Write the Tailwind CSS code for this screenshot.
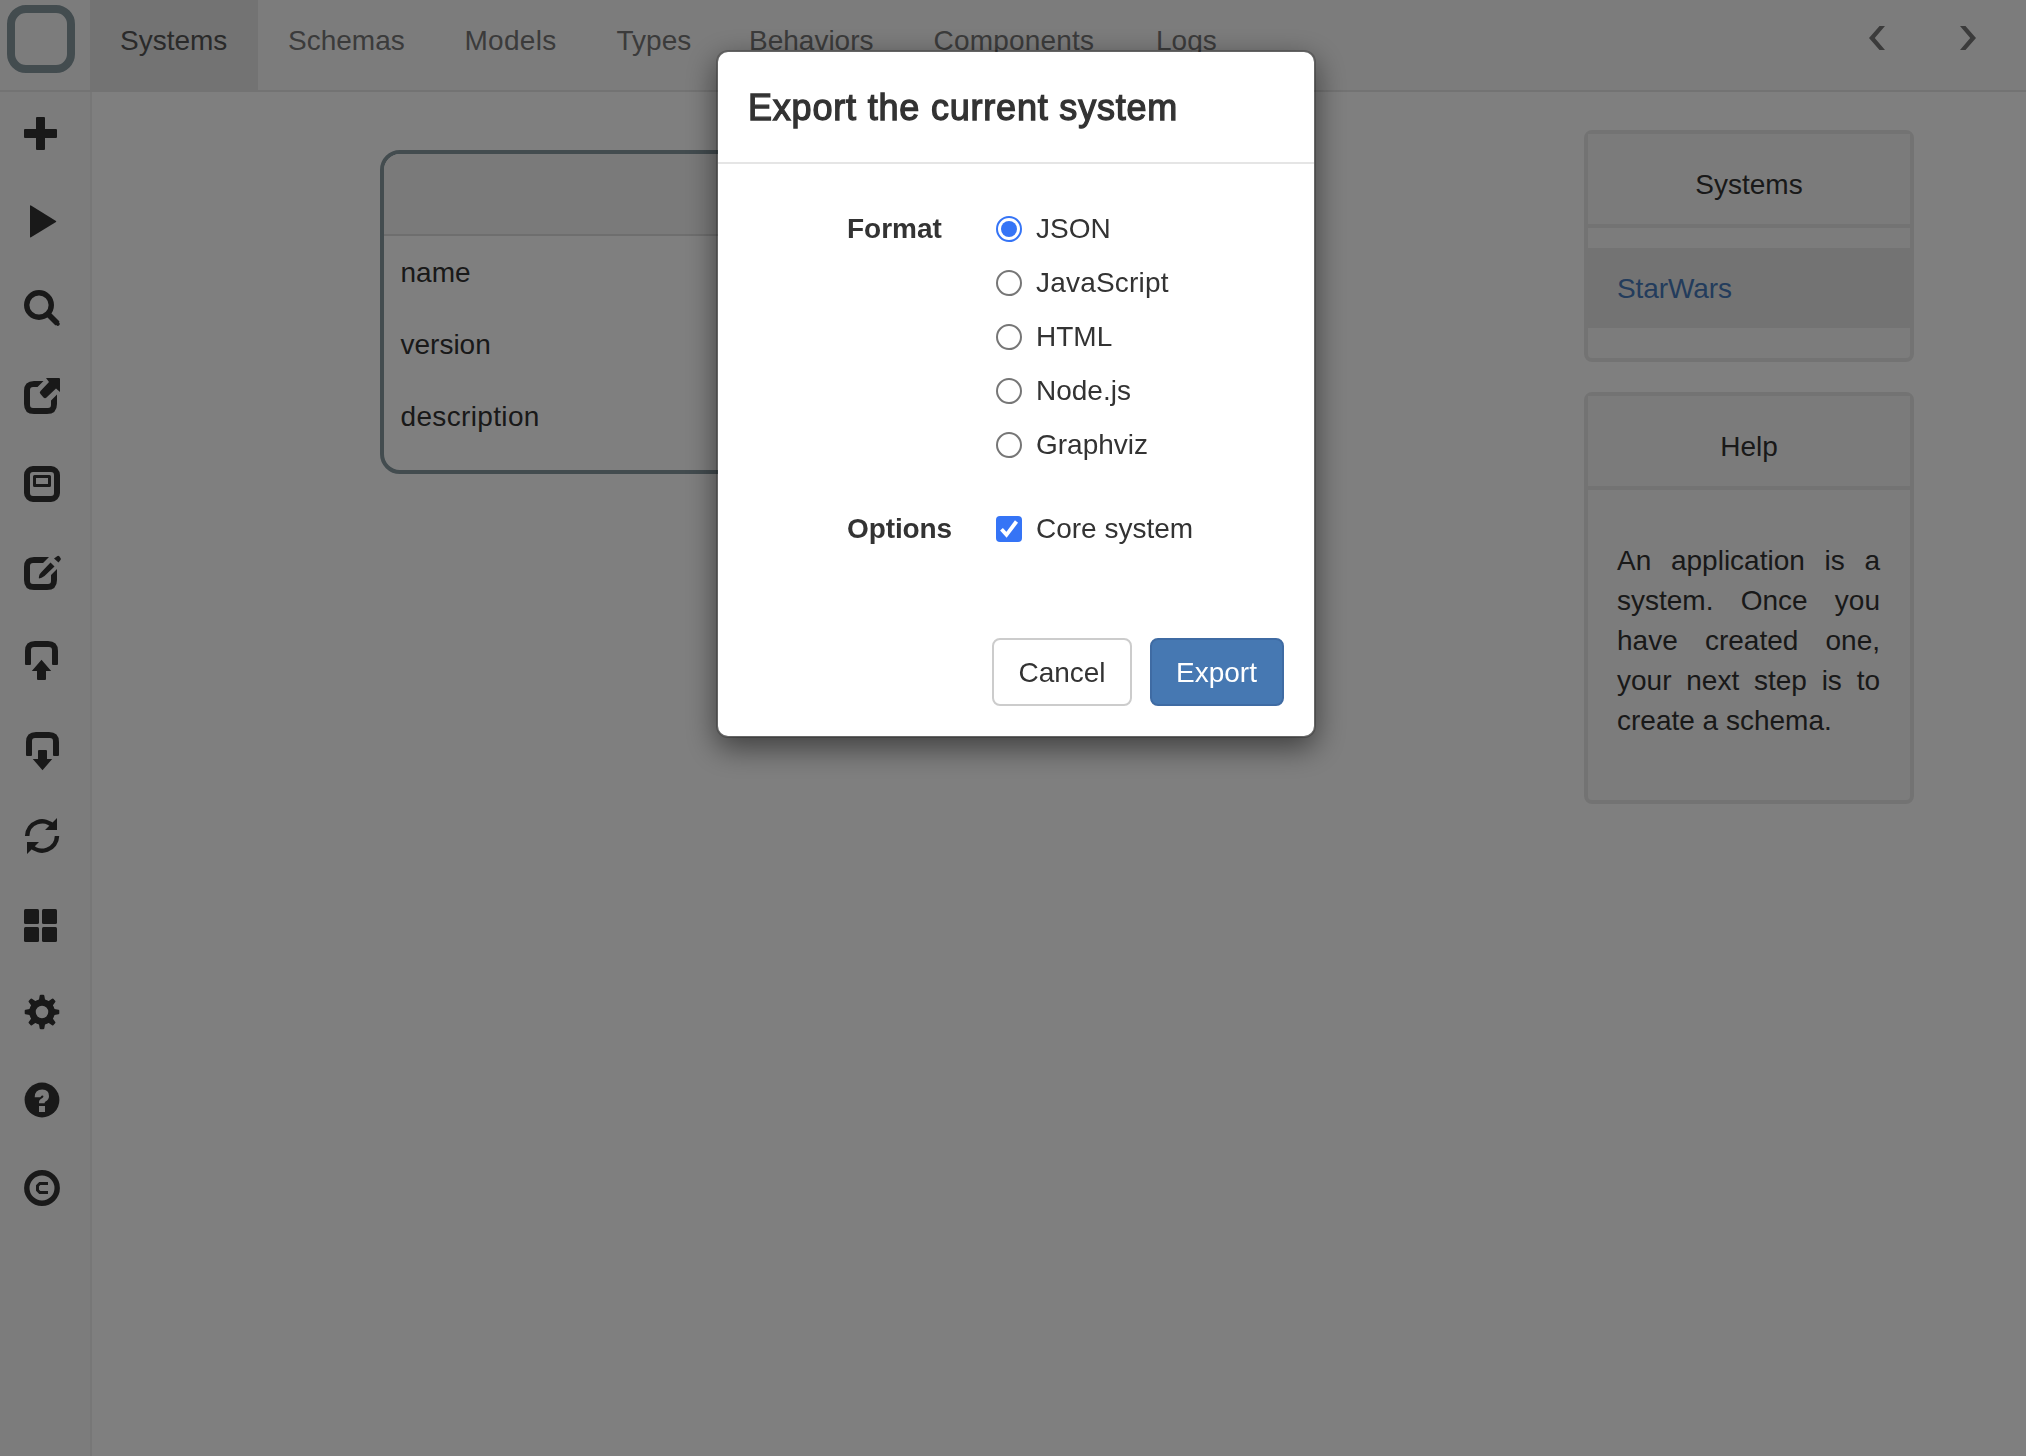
<!DOCTYPE html>
<html lang="en">
<head>
<meta charset="utf-8">
<title>Systems</title>
<script src="https://cdn.jsdelivr.net/npm/@tailwindcss/browser@4"></script>
</head>
<body class="h-screen overflow-hidden bg-white font-['Liberation_Sans',Arial,sans-serif] text-[28px] leading-10 text-[#333]">
<div class="flex h-screen flex-col">
  <header class="flex h-[92px] shrink-0 border-b-2 border-[#e7e7e7] bg-[#f9f9f9]">
    <div class="w-[90px] pl-[7px] pt-[5px]">
      <div class="size-[68px] rounded-[19px] border-8 border-[#86989f]"></div>
    </div>
    <nav class="flex text-[#777]">
      <a class="w-[168px] bg-[#e7e7e7] pl-[30px] pt-[21px] text-[#555]">Systems</a>
      <a class="w-[176.5px] pl-[30px] pt-[21px]">Schemas</a>
      <a class="w-[152px] pl-[30px] pt-[21px] tracking-[0.3px]">Models</a>
      <a class="w-[132.5px] pl-[30px] pt-[21px]">Types</a>
      <a class="w-[184.5px] pl-[30px] pt-[21px]">Behaviors</a>
      <a class="w-[222.5px] pl-[30px] pt-[21px] tracking-[0.2px]">Components</a>
      <a class="pl-[30px] pt-[21px]">Logs</a>
    </nav>
    <div class="ml-auto flex gap-[75px] pr-[50px] pt-[26px]">
      <svg class="h-6 w-4" viewBox="0 0 16 24" fill="#777"><path d="M10.500 0H16L5.800 12 16 24h-5.500L0 12z"/></svg>
      <svg class="h-6 w-4" viewBox="0 0 16 24" fill="#777"><path d="M5.500 0H0l10.200 12L0 24h5.500L16 12z"/></svg>
    </div>
  </header>
  <div class="flex flex-1">
    <aside class="flex w-[92px] flex-col border-r-2 border-[#eee] bg-[#f9f9f9] text-[#333]">
      <svg class="h-[88px] w-[90px]" viewBox="0 92 90 88" fill="currentColor"><path d="M37 117h7q1 0 1 1v11h11q1 0 1 1v7q0 1-1 1H45v11q0 1-1 1h-7q-1 0-1-1v-11H25q-1 0-1-1v-7q0-1 1-1h11v-11q0-1 1-1z"/></svg>
      <svg class="h-[88px] w-[90px]" viewBox="0 180 90 88" fill="currentColor"><path d="M30 206q0-1 1-.5l25 15.500q.5.500 0 1L31 237.300q-1 .5-1-.5z"/></svg>
      <svg class="h-[88px] w-[90px]" viewBox="0 268 90 88" fill="none" stroke="currentColor"><circle cx="39" cy="305" r="12.300" stroke-width="5.400"/><path d="M48.500 314.500l9 9" stroke-width="5.600"/><path d="M57 323l.8.800" stroke-width="4" stroke-linecap="round"/></svg>
      <svg class="h-[88px] w-[90px]" viewBox="0 356 90 88" fill="currentColor"><path d="M33 381h10.500l-6 6H33q-3 0-3 3v15q0 3 3 3h15q3 0 3-3v-4.500l6-6V404q0 10-10 10H34q-10 0-10-10v-13q0-10 10-10z"/><path d="M46 378h13q1 0 1 1v13l-4-3.500-9.500 9q-1.500 1.500-3 0l-3-3.500q-1.500-1.500 0-3l8.500-9z"/></svg>
      <svg class="h-[88px] w-[90px]" viewBox="0 444 90 88" fill="none" stroke="currentColor"><rect x="27" y="469" width="30" height="30" rx="6" stroke-width="6"/><rect x="34.500" y="476.500" width="15" height="9" stroke-width="3" stroke-linejoin="round"/></svg>
      <svg class="h-[88px] w-[90px]" viewBox="0 532 90 88" fill="currentColor"><path d="M34 557h15l-6 6H33q-3 0-3 3v15q0 3 3 3h15q3 0 3-3v-6l6-6V580q0 10-10 10H34q-10 0-10-10v-13q0-10 10-10z"/><path d="M50.500 562.500l4 4-10 9.500q-3 2-5.500 2.500-.5-.5.500-4 .500-1 2-2.500zM57.500 556q1-.5 2 .5l1 1.500q.8 1.200 0 2l-2 2.500-4.500-4z"/></svg>
      <svg class="h-[88px] w-[90px]" viewBox="0 620 90 88" fill="currentColor"><path d="M25 664v-13q0-10 10-10h13q10 0 10 10v13q0 1-1 1h-4q-1 0-1-1v-14q0-3-3-3H34q-3 0-3 3v14q0 1-1 1h-4q-1 0-1-1z"/><path d="M41.500 659.700l9.700 11.300H46v8q0 1-1 1h-7q-1 0-1-1v-8h-5.200z"/></svg>
      <svg class="h-[88px] w-[90px]" viewBox="0 708 90 88" fill="currentColor"><path d="M26 755v-13q0-10 10-10h13q10 0 10 10v13q0 1-1 1h-4q-1 0-1-1v-14q0-3-3-3H35q-3 0-3 3v14q0 1-1 1h-4q-1 0-1-1z"/><path d="M42.500 770.300l-9.700-11.300H38v-8q0-1 1-1h7q1 0 1 1v8h5.200z"/></svg>
      <svg class="h-[88px] w-[90px]" viewBox="0 796 90 88"><g fill="none" stroke="currentColor" stroke-width="4.500"><path d="M27.200 836a15 15 0 0 1 26.300-9.500"/><path d="M57 836a15 15 0 0 1-26.300 9.500"/></g><path fill="currentColor" d="M57 818v12H45zM27 854v-12h12z"/></svg>
      <svg class="h-[88px] w-[90px]" viewBox="0 884 90 88" fill="currentColor"><rect x="24" y="909" width="15" height="15" rx="1.500"/><rect x="42" y="909" width="15" height="15" rx="1.500"/><rect x="24" y="927" width="15" height="15" rx="1.500"/><rect x="42" y="927" width="15" height="15" rx="1.500"/></svg>
      <svg class="h-[88px] w-[90px]" viewBox="0 972 90 88"><circle cx="42" cy="1012" r="9.500" fill="none" stroke="currentColor" stroke-width="6.500"/><g fill="currentColor"><path id="tooth" d="M37 1001l2-1.500.700-4q.2-.800 1-.8h2.600q.8 0 1 .8l.7 4 2 1.500z"/><use href="#tooth" transform="rotate(45 42 1012)"/><use href="#tooth" transform="rotate(90 42 1012)"/><use href="#tooth" transform="rotate(135 42 1012)"/><use href="#tooth" transform="rotate(180 42 1012)"/><use href="#tooth" transform="rotate(225 42 1012)"/><use href="#tooth" transform="rotate(270 42 1012)"/><use href="#tooth" transform="rotate(315 42 1012)"/></g></svg>
      <svg class="h-[88px] w-[90px]" viewBox="0 1060 90 88"><circle cx="42" cy="1100" r="17.400" fill="currentColor"/><path fill="#f9f9f9" d="M34.700 1097.200q0-7.700 7.600-7.700 6.700 0 6.700 6.500 0 3.700-3.500 5.600-.9.600-.9 1.600H39v-1.500q0-1.500 1.500-2.500l2.200-1.500q1.200-1 .5-1.900-1.200-.8-2.700 1.100-.4.300-1 .3zM39 1106h6v6h-6z"/></svg>
      <svg class="h-[88px] w-[90px]" viewBox="0 1148 90 88" fill="none" stroke="currentColor"><circle cx="42" cy="1188" r="15.200" stroke-width="5.400"/><path d="M48 1183.500h-8.200l-2.300 2.300v4.400l2.300 2.300H48" stroke-width="3"/></svg>
    </aside>
    <main class="flex flex-1 items-start justify-between pl-[288px] pr-28">
      <section class="mt-[58px] h-[324px] w-[700px] overflow-hidden rounded-[20px] border-4 border-[#86989f]">
        <div class="h-[82px] border-b-2 border-[#ddd] bg-[#f5f5f5]"></div>
        <ul class="px-[16.5px] pt-px">
          <li class="py-4">name</li>
          <li class="py-4">version</li>
          <li class="py-4 tracking-[0.35px]">description</li>
        </ul>
      </section>
      <div class="mt-[38px] flex w-[330px] flex-col gap-[30px]">
        <section class="rounded-lg border-4 border-[#e7e7e7] bg-[#f8f8f8]">
          <h3 class="border-b-4 border-[#e7e7e7] bg-[#f7f7f7] pb-[19px] pt-[31px] text-center">Systems</h3>
          <div class="pb-[30px] pt-5">
            <a class="block bg-[#e7e7e7] pb-[19px] pl-[29px] pt-[21px] tracking-[-0.1px] text-[#4678b8]">StarWars</a>
          </div>
        </section>
        <section class="rounded-lg border-4 border-[#e7e7e7] bg-[#f8f8f8]">
          <h3 class="border-b-4 border-[#e7e7e7] bg-[#f7f7f7] pb-[19px] pt-[31px] text-center">Help</h3>
          <p class="pb-[59px] pl-[29px] pr-[30px] pt-[51px] text-justify">An application is a system. Once you have created one, your next step is to create a schema.</p>
        </section>
      </div>
    </main>
  </div>
</div>

<div class="fixed inset-0 bg-black/50">
  <div class="ml-[716px] mt-[50px] h-[688px] w-[600px] rounded-[12px] border-2 border-black/20 bg-white bg-clip-padding shadow-[0_10px_30px_rgba(0,0,0,0.5)]">
    <h2 class="h-28 border-b-2 border-[#e5e5e5] pl-[30px] pt-[31px] text-[36px] leading-[50px] tracking-[0.8px] [-webkit-text-stroke:1.3px_#333]">Export the current system</h2>
    <div class="flex flex-col gap-[30px] pl-[129px] pt-[38px]">
      <div class="flex h-[270px] pt-[7px]">
        <div class="w-[149px] font-bold">Format</div>
        <div class="flex flex-col gap-[14px]">
          <label class="flex items-start gap-[14px]"><span class="mt-[7px] flex size-[26px] items-center justify-center rounded-full border-2 border-[#3574f6]"><span class="size-4 rounded-full bg-[#3574f6]"></span></span>JSON</label>
          <label class="flex items-start gap-[14px] tracking-[0.2px]"><span class="mt-[7px] size-[26px] rounded-full border-2 border-[#767676]"></span>JavaScript</label>
          <label class="flex items-start gap-[14px]"><span class="mt-[7px] size-[26px] rounded-full border-2 border-[#767676]"></span>HTML</label>
          <label class="flex items-start gap-[14px]"><span class="mt-[7px] size-[26px] rounded-full border-2 border-[#767676]"></span>Node.js</label>
          <label class="flex items-start gap-[14px]"><span class="mt-[7px] size-[26px] rounded-full border-2 border-[#767676]"></span>Graphviz</label>
        </div>
      </div>
      <div class="flex pt-[7px]">
        <div class="w-[149px] font-bold tracking-[-0.1px]">Options</div>
        <label class="flex items-start gap-[14px]"><svg class="mt-[7px] size-[26px]" viewBox="0 0 26 26"><rect width="26" height="26" rx="4" fill="#3574f6"/><path d="M5.500 13.300l5 5.500L20.500 5.500" fill="none" stroke="#fff" stroke-width="3.800"/></svg>Core system</label>
      </div>
    </div>
    <div class="flex justify-end gap-[18px] pr-[30px] pt-[89px]">
      <button class="h-[68px] w-[140px] rounded-lg border-2 border-[#ccc] pt-0.5">Cancel</button>
      <button class="h-[68px] w-[134px] rounded-lg border-2 border-[#3f6ba3] bg-[#4678b2] pr-px pt-0.5 text-white">Export</button>
    </div>
  </div>
</div>
</body>
</html>
